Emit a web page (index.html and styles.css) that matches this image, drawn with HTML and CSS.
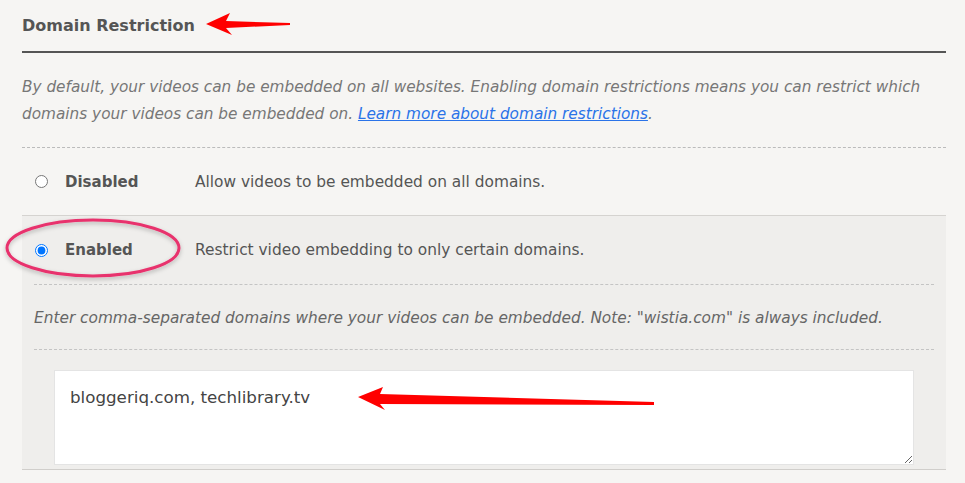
FILE: index.html
```html
<!DOCTYPE html>
<html lang="en">

<head>
    <meta charset="UTF-8">
    <meta name="viewport" content="width=device-width, initial-scale=1.0">
    <title>Domain Restriction</title>
    <link rel="stylesheet" href="styles.css">
</head>

<body>
    <div class="section">
        <h2 class="section-title">Domain Restriction</h2>
        <p class="intro">By default, your videos can be embedded on all websites. Enabling domain restrictions means you can restrict which domains your videos can be embedded on. <a href="#">Learn more about domain restrictions</a>.</p>

        <label class="option">
            <input type="radio" name="restrict" value="off">
            <span class="option-name">Disabled</span>
            <span class="option-desc">Allow videos to be embedded on all domains.</span>
        </label>

        <div class="enabled-panel">
            <label class="option">
                <input type="radio" name="restrict" value="on" checked>
                <span class="option-name">Enabled</span>
                <span class="option-desc">Restrict video embedding to only certain domains.</span>
            </label>
            <div class="panel-body">
                <p class="note">Enter comma-separated domains where your videos can be embedded. Note: "wistia.com" is always included.</p>
                <textarea class="domains">bloggeriq.com, techlibrary.tv</textarea>
            </div>
        </div>
    </div>

    <!-- screenshot annotations -->
    <svg class="marks" width="965" height="483" viewBox="0 0 965 483">
        <defs>
            <filter id="shade" x="-20%" y="-40%" width="140%" height="180%">
                <feDropShadow dx="0" dy="2" stdDeviation="2" flood-color="#000" flood-opacity="0.25"/>
            </filter>
        </defs>
        <polygon points="206,24 230,13 226,21 290,23 290,25 226,28 232,35" fill="#ff0000"/>
        <ellipse cx="93" cy="248" rx="86" ry="28" fill="none" stroke="#e8336d" stroke-width="3" filter="url(#shade)"/>
        <polygon points="358,397 383,387 380,394 654,402 654,405 380,404 385,410" fill="#ff0000"/>
    </svg>
</body>

</html>
```

FILE: styles.css
```css
body {
    margin: 0;
    background-color: #f6f5f3;
    font-family: "DejaVu Sans", Verdana, sans-serif;
    color: #555;
    position: relative;
}
.section {
    padding: 0 19px 0 22px;
}
.section-title {
    margin: 0;
    padding: 14px 0 13px;
    font-size: 16px;
    line-height: 24px;
    font-weight: bold;
    color: #555;
    border-bottom: 2px solid #555;
}
.intro {
    margin: 21px 0 0;
    padding-bottom: 19px;
    font-size: 15.3px;
    line-height: 27px;
    font-style: italic;
    color: #777;
    border-bottom: 1px dashed #bbb;
}
.intro a {
    color: #2a73e8;
}
.option {
    display: flex;
    align-items: center;
    height: 67px;
    padding-left: 13px;
    font-size: 15.4px;
}
.option input {
    margin: 0 17px 0 0;
    width: 13px;
    height: 13px;
}
.option-name {
    width: 130px;
    font-weight: bold;
    font-size: 15px;
    color: #555;
}
.option-desc {
    color: #555;
}
.enabled-panel {
    background-color: #efeeec;
    border-top: 1px solid #d5d3d0;
    border-bottom: 1px solid #d0cecb;
}
.enabled-panel .option {
    height: 68px;
}
.panel-body {
    margin: 0 12px;
    padding-bottom: 4px;
}
.note {
    margin: 0;
    padding: 21px 0 19px;
    font-size: 15.35px;
    line-height: 24px;
    font-style: italic;
    color: #666;
    border-top: 1px dashed #c4c4c4;
    border-bottom: 1px dashed #c4c4c4;
}
.domains {
    display: block;
    box-sizing: border-box;
    width: calc(100% - 40px);
    height: 95px;
    margin: 20px 20px 0;
    padding: 15px 15px;
    border: 1px solid #e4e4e4;
    background: #fff;
    font-family: "DejaVu Sans", Verdana, sans-serif;
    font-size: 16.7px;
    line-height: 22px;
    color: #444;
}
.marks {
    position: absolute;
    top: 0;
    left: 0;
    pointer-events: none;
}
```
